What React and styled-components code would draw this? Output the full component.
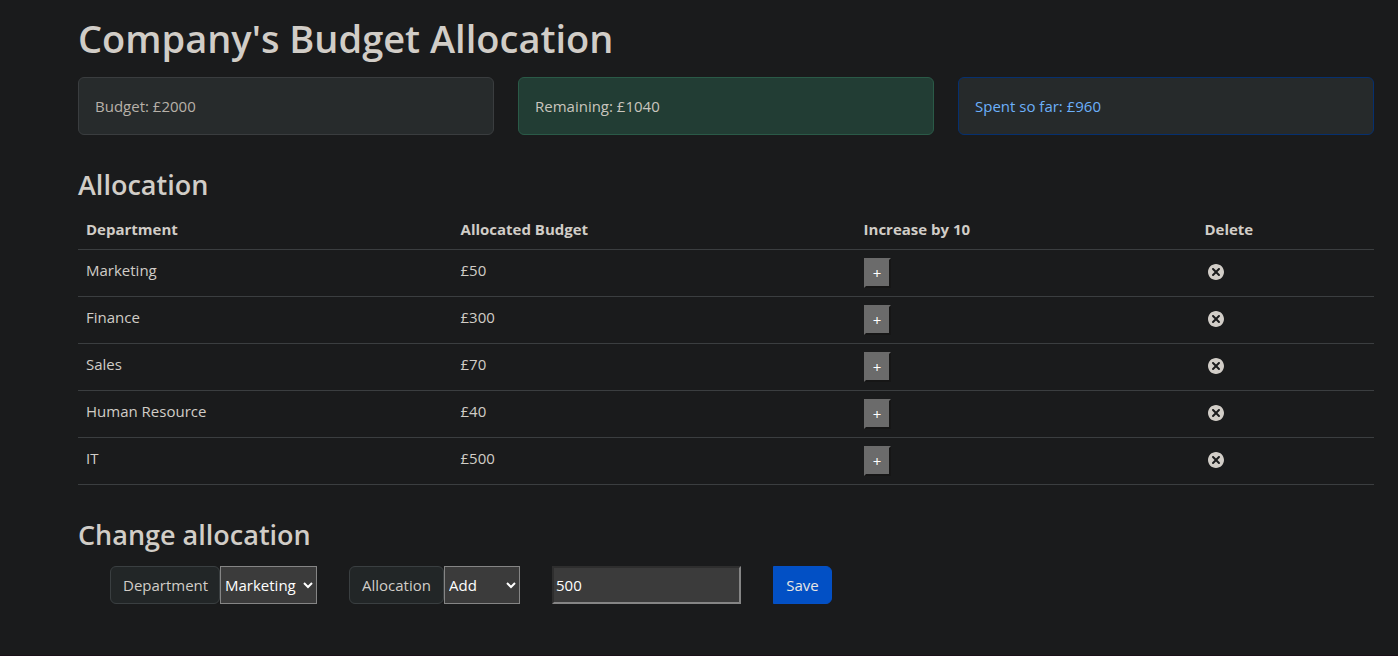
import React, { useState } from "react";
import styled, { createGlobalStyle } from "styled-components";
import { TiDelete } from "react-icons/ti";

const GlobalStyle = createGlobalStyle`
  *, *::before, *::after { box-sizing: border-box; }
  body {
    margin: 0;
    background: #1a1b1c;
    color: #d1cdc7;
    font-family: "Segoe UI", "Open Sans", "Noto Sans", sans-serif;
    font-size: 15px;
    line-height: 24px;
  }
`;

const Page = styled.main`
  min-height: 100vh;
  padding: 14px 24px 48px 78px;
  border-bottom: 1px solid #1a1018;
`;

const Title = styled.h1`
  margin: 0 0 15px;
  font-size: 38px;
  font-weight: 600;
  line-height: 48px;
`;

const Heading = styled.h3`
  margin: 33px 0 ${(p) => p.$gap}px;
  font-size: 27px;
  font-weight: 600;
  line-height: 34px;
`;

const Summary = styled.section`
  display: grid;
  grid-template-columns: repeat(3, 1fr);
  gap: 24px;
`;

const tones = {
  secondary: { bg: "#272b2c", border: "#3a3d3f", text: "#b7b1a9" },
  success: { bg: "#223d34", border: "#2a5a47", text: "#c9c5be" },
  primary: { bg: "#262a2b", border: "#06306f", text: "#6cb0fa" },
};

const Alert = styled.div`
  padding: 16px;
  border: 1px solid ${(p) => tones[p.$tone].border};
  border-radius: 6px;
  background: ${(p) => tones[p.$tone].bg};
  color: ${(p) => tones[p.$tone].text};
`;

const Table = styled.table`
  width: 100%;
  table-layout: fixed;
  border-collapse: collapse;
`;

const HeadCell = styled.th`
  width: ${(p) => p.$width};
  padding: 8px;
  border-bottom: 1px solid #3b3e40;
  font-weight: 700;
  text-align: left;
`;

const Cell = styled.td`
  height: 47px;
  padding: 8px;
  border-bottom: 1px solid #3b3e40;
  vertical-align: top;
`;

const IncreaseButton = styled.button`
  display: block;
  width: 27px;
  height: 30px;
  padding: 0 6px;
  border: 2px solid;
  border-color: #6b6b6b #161616 #161616 #6b6b6b;
  background: #6b6b6b;
  color: #fff;
  font: inherit;
`;

const DeleteButton = styled.button`
  display: flex;
  margin: 2px 0 0;
  padding: 0;
  border: 0;
  background: none;
  color: #d1cdc7;
`;

const Form = styled.form`
  display: flex;
  flex-wrap: wrap;
  gap: 32px;
  padding-left: 32px;
`;

const Group = styled.div`
  display: flex;
  height: 38px;
`;

const GroupLabel = styled.label`
  width: ${(p) => p.$width}px;
  padding: 6px 12px;
  border: 1px solid #3a3f41;
  border-radius: 6px;
  background: #222627;
  white-space: nowrap;
`;

const Select = styled.select`
  width: ${(p) => p.$width}px;
  padding: 0;
  border: 1px solid #858585;
  border-radius: 0;
  background: #3b3b3b;
  color: #fff;
  font: inherit;
`;

const AmountInput = styled.input`
  width: 189px;
  height: 38px;
  padding: 1px 2px;
  border: 2px solid;
  border-color: #2e2e2e #858585 #858585 #2e2e2e;
  background: #3b3b3b;
  color: #fff;
  font: inherit;
`;

const SaveButton = styled.button`
  width: 59px;
  height: 38px;
  padding: 0;
  border: 1px solid #0550c4;
  border-radius: 0 6px 6px 0;
  background: #0250c5;
  color: #e8e6e3;
  font: inherit;
`;

const initial = [
  { name: "Marketing", amount: 50 },
  { name: "Finance", amount: 300 },
  { name: "Sales", amount: 70 },
  { name: "Human Resource", amount: 40 },
  { name: "IT", amount: 500 },
];

const BUDGET = 2000;

export default function App() {
  const [rows, setRows] = useState(initial);
  const [department, setDepartment] = useState("Marketing");
  const [action, setAction] = useState("Add");
  const [amount, setAmount] = useState("500");
  const spent = rows.reduce((sum, row) => sum + row.amount, 0);

  const change = (name, delta) =>
    setRows((list) =>
      list.map((row) =>
        row.name === name ? { ...row, amount: Math.max(0, row.amount + delta) } : row
      )
    );

  const save = (event) => {
    event.preventDefault();
    change(department, (action === "Add" ? 1 : -1) * Number(amount));
  };

  return (
    <Page>
      <GlobalStyle />
      <Title>Company's Budget Allocation</Title>
      <Summary>
        <Alert $tone="secondary">Budget: £{BUDGET}</Alert>
        <Alert $tone="success">Remaining: £{BUDGET - spent}</Alert>
        <Alert $tone="primary">Spent so far: £{spent}</Alert>
      </Summary>

      <Heading $gap={7}>Allocation</Heading>
      <Table>
        <thead>
          <tr>
            <HeadCell scope="col" $width="28.9%">Department</HeadCell>
            <HeadCell scope="col" $width="31.1%">Allocated Budget</HeadCell>
            <HeadCell scope="col" $width="26.3%">Increase by 10</HeadCell>
            <HeadCell scope="col" $width="13.7%">Delete</HeadCell>
          </tr>
        </thead>
        <tbody>
          {rows.map((row) => (
            <tr key={row.name}>
              <Cell>{row.name}</Cell>
              <Cell>£{row.amount}</Cell>
              <Cell>
                <IncreaseButton
                  type="button"
                  aria-label={`Increase ${row.name} by 10`}
                  onClick={() => change(row.name, 10)}
                >
                  +
                </IncreaseButton>
              </Cell>
              <Cell>
                <DeleteButton
                  type="button"
                  aria-label={`Delete ${row.name}`}
                  onClick={() => change(row.name, -row.amount)}
                >
                  <TiDelete size={24} />
                </DeleteButton>
              </Cell>
            </tr>
          ))}
        </tbody>
      </Table>

      <Heading $gap={14}>Change allocation</Heading>
      <Form onSubmit={save}>
        <Group>
          <GroupLabel htmlFor="department" $width={110}>Department</GroupLabel>
          <Select
            id="department"
            $width={97}
            value={department}
            onChange={(e) => setDepartment(e.target.value)}
          >
            {initial.map((row) => (
              <option key={row.name}>{row.name}</option>
            ))}
          </Select>
        </Group>
        <Group>
          <GroupLabel htmlFor="action" $width={95}>Allocation</GroupLabel>
          <Select
            id="action"
            $width={76}
            value={action}
            onChange={(e) => setAction(e.target.value)}
          >
            <option>Add</option>
            <option>Reduce</option>
          </Select>
        </Group>
        <AmountInput
          type="text"
          inputMode="numeric"
          aria-label="Amount"
          value={amount}
          onChange={(e) => setAmount(e.target.value)}
        />
        <SaveButton type="submit">Save</SaveButton>
      </Form>
    </Page>
  );
}
